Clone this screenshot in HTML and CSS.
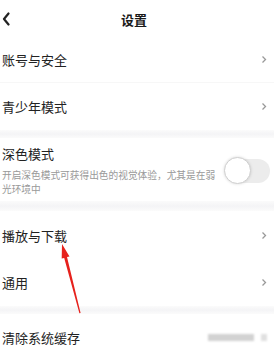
FILE: index.html
```html
<!DOCTYPE html>
<html lang="zh">
<head>
    <meta charset="UTF-8">
    <meta name="viewport" content="width=device-width, initial-scale=1.0">
    <title>设置</title>
    <link rel="stylesheet" href="styles.css">
</head>
<body>
    <div class="page">
        <div class="header">
            <svg class="back" width="10" height="14" viewBox="0 0 10 14">
                <polyline points="7.5,1.5 3,7 7.5,12.5" fill="none" stroke="#222" stroke-width="2.2" stroke-linecap="round" stroke-linejoin="round"/>
            </svg>
            <div class="title">设置</div>
        </div>

        <div class="row line">
            <span class="label">账号与安全</span>
            <svg class="arrow-right" width="6" height="9" viewBox="0 0 6 9"><polyline points="1.5,1.5 4.5,4.5 1.5,7.5" fill="none" stroke="#999" stroke-width="1.3"/></svg>
        </div>
        <div class="row">
            <span class="label">青少年模式</span>
            <svg class="arrow-right" width="6" height="9" viewBox="0 0 6 9"><polyline points="1.5,1.5 4.5,4.5 1.5,7.5" fill="none" stroke="#999" stroke-width="1.3"/></svg>
        </div>

        <div class="gap"></div>

        <div class="row dark-mode">
            <div class="text">
                <div class="label">深色模式</div>
                <div class="desc">开启深色模式可获得出色的视觉体验，尤其是在弱光环境中</div>
            </div>
            <div class="switch"><div class="knob"></div></div>
        </div>

        <div class="gap big"></div>

        <div class="row tall">
            <span class="label">播放与下载</span>
            <svg class="arrow-right" width="6" height="9" viewBox="0 0 6 9"><polyline points="1.5,1.5 4.5,4.5 1.5,7.5" fill="none" stroke="#999" stroke-width="1.3"/></svg>
        </div>
        <div class="row">
            <span class="label">通用</span>
            <svg class="arrow-right" width="6" height="9" viewBox="0 0 6 9"><polyline points="1.5,1.5 4.5,4.5 1.5,7.5" fill="none" stroke="#999" stroke-width="1.3"/></svg>
        </div>

        <div class="gap"></div>

        <div class="row">
            <span class="label">清除系统缓存</span>
            <span class="cache">
                <span class="size"></span>
                <span class="dot"></span>
            </span>
        </div>

        <!-- red pointer drawn over the list -->
        <svg class="pointer" width="274" height="353" viewBox="0 0 274 353">
            <polygon points="62,244 69.5,256.5 67,257.1 80.6,313 79.4,313.2 64.2,257.9 61.7,258.5" fill="#e6211c"/>
        </svg>
    </div>
</body>
</html>
```

FILE: styles.css
```css
body {
    margin: 0;
    background-color: #fff;
    font-family: "Noto Sans CJK SC", "Noto Sans", sans-serif;
    color: #222;
}
.page {
    position: relative;
    width: 274px;
    height: 353px;
    overflow: hidden;
}
.header {
    height: 36px;
    display: flex;
    align-items: center;
    justify-content: center;
    position: relative;
}
.back {
    position: absolute;
    left: 1px;
    top: 12px;
}
.title {
    font-size: 13px;
    font-weight: bold;
    color: #1a1a1a;
    margin-right: 6px;
    margin-top: 2px;
}
.row {
    height: 47px;
    display: flex;
    align-items: center;
    justify-content: space-between;
    padding: 0 7px 0 2px;
    box-sizing: border-box;
}
.row.line {
    border-bottom: 1px solid #f7f7f7;
}
.row.tall {
    height: 48px;
}
.label {
    font-size: 13px;
    color: #222;
}
.gap {
    height: 8px;
    background: linear-gradient(#fbfbfb, #f4f4f6 50%, #fbfbfb);
}
.gap.big {
    height: 10px;
}
.dark-mode {
    height: 63px;
    align-items: flex-start;
    padding-top: 6px;
    padding-right: 4px;
}
.dark-mode .text {
    width: 218px;
}
.desc {
    font-size: 9.7px;
    line-height: 13.5px;
    color: #999;
    margin-top: 6px;
}
.switch {
    position: relative;
    width: 42px;
    height: 24px;
    margin-top: 15px;
    border-radius: 12px;
    background-color: #ececec;
}
.knob {
    position: absolute;
    left: -4px;
    top: -2px;
    width: 25px;
    height: 25px;
    border-radius: 50%;
    background-color: #fff;
    border: 1.5px solid #cfcfcf;
    box-shadow: 0 0 3px rgba(0,0,0,0.15);
}
.cache {
    display: flex;
    align-items: center;
    gap: 7px;
    filter: blur(1px);
}
.size {
    width: 46px;
    height: 7px;
    background-color: #d2d2d2;
}
.dot {
    width: 6px;
    height: 7px;
    background-color: #e0e0e0;
}
.pointer {
    position: absolute;
    left: 0;
    top: 0;
    pointer-events: none;
}
```
